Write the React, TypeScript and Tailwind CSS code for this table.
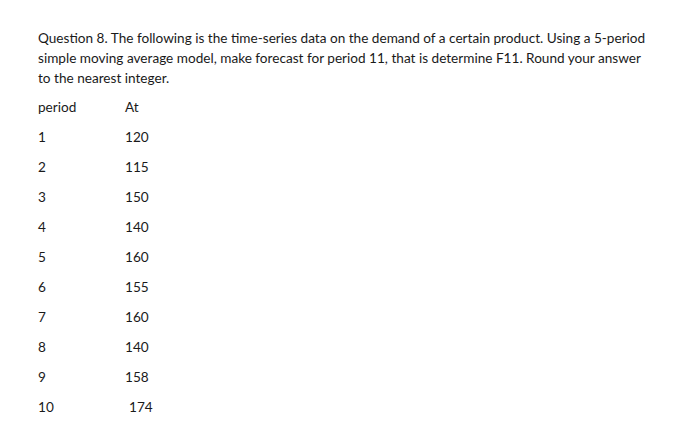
import React from "react";

const rows: [string, string, boolean?][] = [
  ["1", "120"],
  ["2", "115"],
  ["3", "150"],
  ["4", "140"],
  ["5", "160"],
  ["6", "155"],
  ["7", "160"],
  ["8", "140"],
  ["9", "158"],
  ["10", "174", true],
];

export default function App() {
  return (
    <div
      className="w-[678px] h-[439px] bg-white text-[#1a1a1a] pl-[38px] pt-[28px] overflow-hidden"
      style={{ fontFamily: "Lato, 'Open Sans', sans-serif" }}
    >
      <div className="text-[13.6px] leading-[20px] whitespace-nowrap">
        <div>
          Question 8. The following is the time-series data on the demand of a certain product. Using a 5-period
        </div>
        <div>
          simple moving average model, make forecast for period 11, that is determine F11. Round your answer
        </div>
        <div>to the nearest integer.</div>
      </div>
      <div className="mt-[4px] text-[13.6px]">
        <div className="flex h-[30px] items-center">
          <div className="w-[87px]">period</div>
          <div>At</div>
        </div>
        {rows.map(([p, a, shift]) => (
          <div key={p} className="flex h-[30px] items-center">
            <div className="w-[87px]">{p}</div>
            <div className={shift ? "pl-[4px]" : ""}>{a}</div>
          </div>
        ))}
      </div>
    </div>
  );
}
